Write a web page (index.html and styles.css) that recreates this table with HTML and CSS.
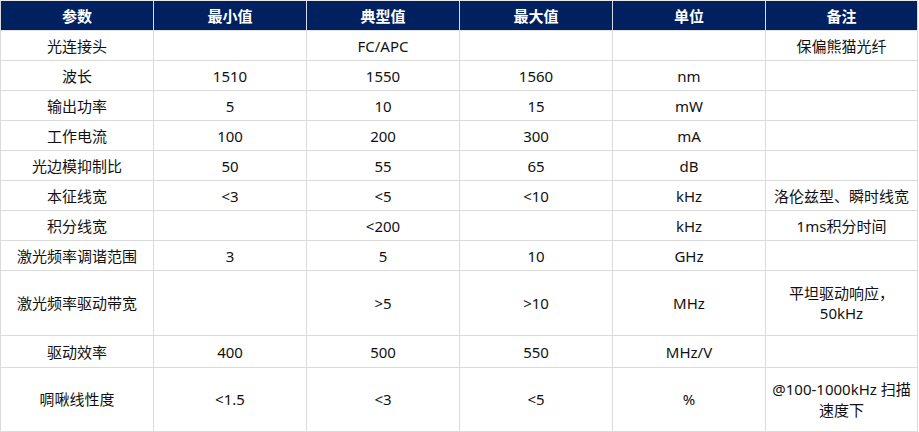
FILE: index.html
```html
<!DOCTYPE html>
<html lang="zh-CN">
<head>
<meta charset="utf-8">
<title>参数表</title>
<link rel="stylesheet" href="styles.css">
</head>
<body>
<table class="spec">
  <colgroup>
    <col class="c"><col class="c"><col class="c"><col class="c"><col class="c"><col class="c-last">
  </colgroup>
  <thead>
    <tr class="head">
      <th>参数</th><th>最小值</th><th>典型值</th><th>最大值</th><th>单位</th><th>备注</th>
    </tr>
  </thead>
  <tbody>
    <tr><td>光连接头</td><td></td><td>FC/APC</td><td></td><td></td><td>保偏熊猫光纤</td></tr>
    <tr><td>波长</td><td>1510</td><td>1550</td><td>1560</td><td>nm</td><td></td></tr>
    <tr><td>输出功率</td><td>5</td><td>10</td><td>15</td><td>mW</td><td></td></tr>
    <tr><td>工作电流</td><td>100</td><td>200</td><td>300</td><td>mA</td><td></td></tr>
    <tr><td>光边模抑制比</td><td>50</td><td>55</td><td>65</td><td>dB</td><td></td></tr>
    <tr><td>本征线宽</td><td>&lt;3</td><td>&lt;5</td><td>&lt;10</td><td>kHz</td><td>洛伦兹型、瞬时线宽</td></tr>
    <tr><td>积分线宽</td><td></td><td>&lt;200</td><td></td><td>kHz</td><td>1ms积分时间</td></tr>
    <tr><td>激光频率调谐范围</td><td>3</td><td>5</td><td>10</td><td>GHz</td><td></td></tr>
    <tr class="tall"><td>激光频率驱动带宽</td><td></td><td>&gt;5</td><td>&gt;10</td><td>MHz</td><td>平坦驱动响应，<br>50kHz</td></tr>
    <tr class="mid"><td>驱动效率</td><td>400</td><td>500</td><td>550</td><td>MHz/V</td><td></td></tr>
    <tr class="tall2"><td>啁啾线性度</td><td>&lt;1.5</td><td>&lt;3</td><td>&lt;5</td><td>%</td><td>@100-1000kHz 扫描<br>速度下</td></tr>
  </tbody>
</table>
</body>
</html>
```
FILE: styles.css
```css
html, body {
  margin: 0;
  padding: 0;
  background: #ffffff;
}

.spec {
  border-collapse: separate;
  border-spacing: 0;
  table-layout: fixed;
  width: 918px;
  border-left: 1px solid #dadada;
  border-top: 1px solid #e8e8e8;
  font-family: "Noto Sans", "Noto Sans CJK SC", sans-serif;
  font-size: 15px;
  color: #111111;
}

.spec .c {
  width: 153px;
}

.spec .c-last {
  width: 152px;
}

.spec th,
.spec td {
  border-right: 1px solid #dadada;
  border-bottom: 1px solid #dadada;
  padding: 0;
  height: 29px;
  line-height: 20px;
  text-align: center;
  vertical-align: middle;
  white-space: nowrap;
  overflow: hidden;
}

.spec .head th {
  background: #002060;
  color: #ffffff;
  font-weight: 700;
  border-right-color: #d6dbe6;
  border-bottom-color: #e4e4e4;
}

.spec .tall td {
  height: 64px;
}

.spec .mid td {
  height: 31px;
}

.spec .tall2 td {
  height: 63px;
  line-height: 21px;
}
```
